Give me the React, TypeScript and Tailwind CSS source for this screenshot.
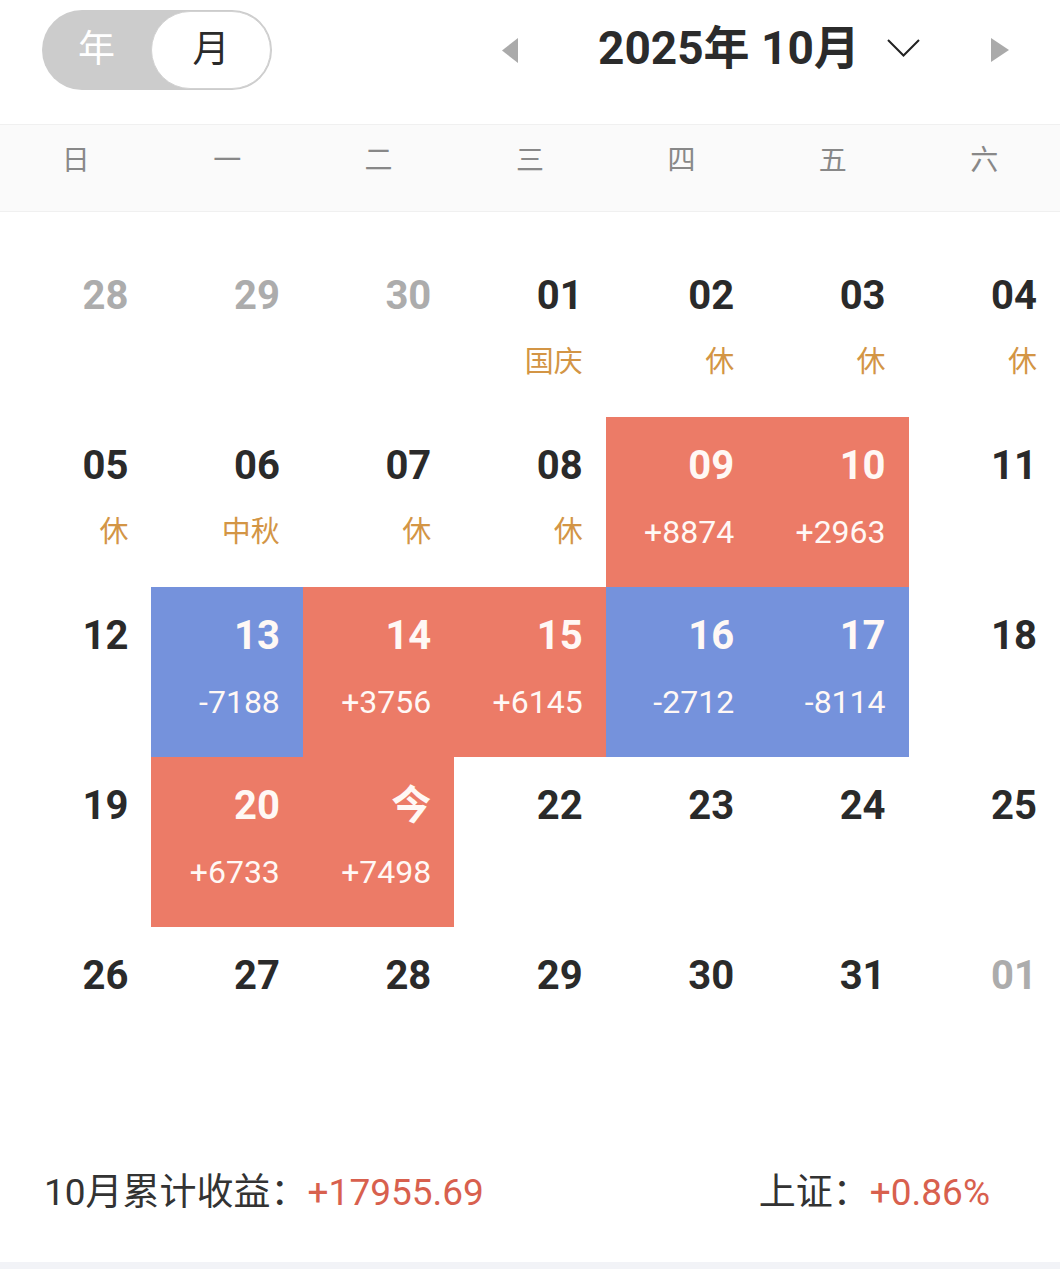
type Cell = {
  d: string;
  muted?: boolean;
  tag?: string;
  pnl?: string;
  up?: boolean;
};

const weekdays = ["日", "一", "二", "三", "四", "五", "六"];

const rows: Cell[][] = [
  [
    { d: "28", muted: true },
    { d: "29", muted: true },
    { d: "30", muted: true },
    { d: "01", tag: "国庆" },
    { d: "02", tag: "休" },
    { d: "03", tag: "休" },
    { d: "04", tag: "休" },
  ],
  [
    { d: "05", tag: "休" },
    { d: "06", tag: "中秋" },
    { d: "07", tag: "休" },
    { d: "08", tag: "休" },
    { d: "09", pnl: "+8874", up: true },
    { d: "10", pnl: "+2963", up: true },
    { d: "11" },
  ],
  [
    { d: "12" },
    { d: "13", pnl: "-7188", up: false },
    { d: "14", pnl: "+3756", up: true },
    { d: "15", pnl: "+6145", up: true },
    { d: "16", pnl: "-2712", up: false },
    { d: "17", pnl: "-8114", up: false },
    { d: "18" },
  ],
  [
    { d: "19" },
    { d: "20", pnl: "+6733", up: true },
    { d: "今", pnl: "+7498", up: true },
    { d: "22" },
    { d: "23" },
    { d: "24" },
    { d: "25" },
  ],
  [
    { d: "26" },
    { d: "27" },
    { d: "28" },
    { d: "29" },
    { d: "30" },
    { d: "31" },
    { d: "01", muted: true },
  ],
];

function DayCell({ cell }: { cell: Cell }) {
  const filled = cell.pnl !== undefined;
  const bg = filled ? (cell.up ? "bg-[#ec7b67]" : "bg-[#7592dc]") : "bg-white";
  const numColor = filled
    ? "text-[#fff8f5]"
    : cell.muted
      ? "text-[#acacac]"
      : "text-[#2a2a2a]";

  return (
    <div className={`h-[170px] flex flex-col items-end pr-[23px] pt-[29px] gap-[30px] ${bg}`}>
      <div className={`text-[40px] leading-[40px] font-bold ${numColor}`}>{cell.d}</div>
      {cell.tag && (
        <div className="text-[29px] leading-[32px] text-[#d39545]">{cell.tag}</div>
      )}
      {cell.pnl && (
        <div className="text-[32px] leading-[32px] text-[#fff8f5]">{cell.pnl}</div>
      )}
    </div>
  );
}

export default function App() {
  return (
    <div className="w-[1060px] h-[1269px] bg-white overflow-hidden flex flex-col font-[Roboto,'Noto_Sans_CJK_SC',sans-serif]">
      {/* Header: year/month toggle + month switcher */}
      <div className="h-[124px] shrink-0">
        <div className="h-[100px] flex items-center">
          <div className="ml-[42px] w-[230px] h-[80px] rounded-full bg-[#cccccc] flex items-center">
            <div className="flex-1 text-center text-[37px] text-white">年</div>
            <div className="w-[120px] h-[78px] mr-[1px] rounded-full bg-white border border-[#d2d2d2] flex items-center justify-center text-[37px] text-[#2a2a2a]">
              月
            </div>
          </div>

          <svg className="ml-[230px]" width="16" height="25" viewBox="0 0 16 25">
            <polygon points="16,0 0,12.5 16,25" fill="#aaaaaa" />
          </svg>
          <div className="ml-[80px] mb-[5px] text-[46px] leading-none font-bold text-[#2b2b2b] whitespace-nowrap">
            2025年 10月
          </div>
          <svg className="ml-[27px] mb-[4px]" width="33" height="18" viewBox="0 0 33 18">
            <polyline points="1,1 16.5,16.5 32,1" fill="none" stroke="#222222" strokeWidth="2" />
          </svg>
          <svg className="ml-[71px]" width="18" height="24" viewBox="0 0 18 24">
            <polygon points="0,0 18,12 0,24" fill="#aaaaaa" />
          </svg>
        </div>
      </div>

      {/* Weekday band */}
      <div className="h-[88px] shrink-0 bg-[#fafafa] border-t border-b border-[#f0f0f0] grid grid-cols-7 items-center pb-[14px]">
        {weekdays.map((w) => (
          <div key={w} className="text-center text-[28px] text-[#888888]">
            {w}
          </div>
        ))}
      </div>

      {/* Month grid */}
      <div className="pt-[35px] shrink-0">
        {rows.map((row, i) => (
          <div key={i} className="grid grid-cols-7">
            {row.map((c, j) => (
              <DayCell key={j} cell={c} />
            ))}
          </div>
        ))}
      </div>

      {/* Summary footer */}
      <div className="flex-1 flex items-center justify-between pl-[44px] pr-[70px] pt-[26px] text-[37px]">
        <div className="text-[#333333]">
          10月累计收益：<span className="text-[#d8604e]">+17955.69</span>
        </div>
        <div className="text-[#333333]">
          上证：<span className="text-[#d8604e]">+0.86%</span>
        </div>
      </div>
      <div className="h-[7px] shrink-0 bg-[#f2f3f7]" />
    </div>
  );
}
